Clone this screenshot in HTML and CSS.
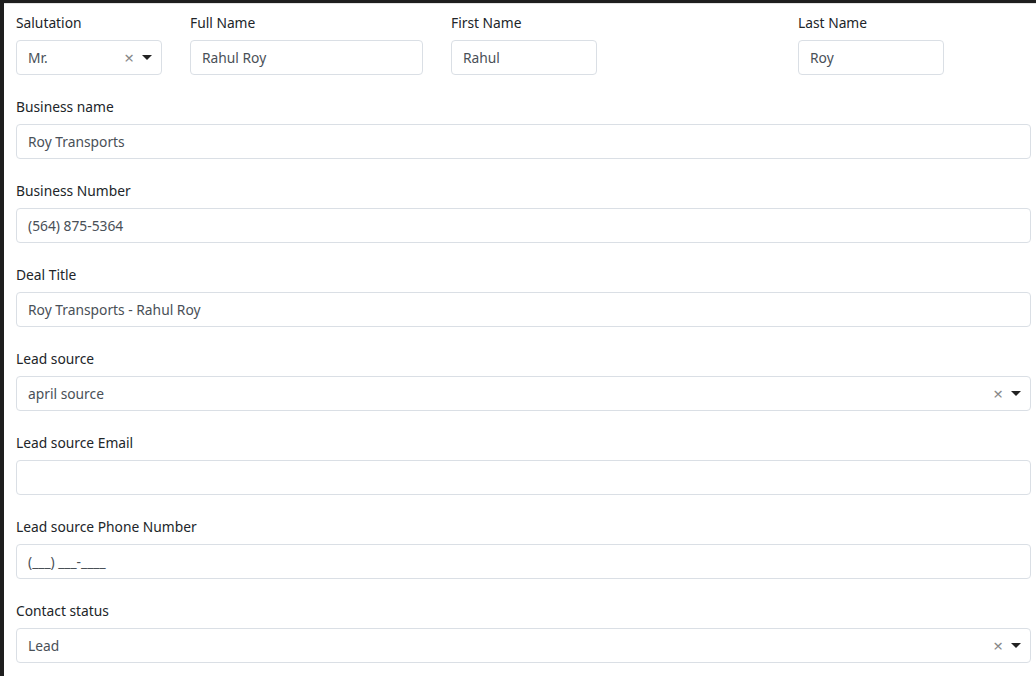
FILE: index.html
```html
<!DOCTYPE html>
<html lang="en">
<head>
  <meta charset="UTF-8" />
  <title>Deal Form</title>
  <link rel="stylesheet" href="styles.css">
</head>
<body>
  <form class="deal-form">
    <div class="name-row">
      <div class="form-group">
        <label>Salutation</label>
        <div class="select-box">
          <span class="select-value">Mr.</span>
          <span class="select-clear">&times;</span>
          <span class="select-caret"></span>
        </div>
      </div>
      <div class="form-group">
        <label>Full Name</label>
        <input class="form-control" type="text" value="Rahul Roy">
      </div>
      <div class="form-group">
        <label>First Name</label>
        <input class="form-control short" type="text" value="Rahul">
      </div>
      <div class="form-group">
        <label>Last Name</label>
        <input class="form-control short" type="text" value="Roy">
      </div>
    </div>

    <div class="form-group">
      <label>Business name</label>
      <input class="form-control" type="text" value="Roy Transports">
    </div>

    <div class="form-group">
      <label>Business Number</label>
      <input class="form-control" type="text" value="(564) 875-5364">
    </div>

    <div class="form-group">
      <label>Deal Title</label>
      <input class="form-control" type="text" value="Roy Transports - Rahul Roy">
    </div>

    <div class="form-group">
      <label>Lead source</label>
      <div class="select-box">
        <span class="select-value">april source</span>
        <span class="select-clear">&times;</span>
        <span class="select-caret"></span>
      </div>
    </div>

    <div class="form-group">
      <label>Lead source Email</label>
      <input class="form-control" type="text" value="">
    </div>

    <div class="form-group">
      <label>Lead source Phone Number</label>
      <input class="form-control" type="text" value="(___) ___-____">
    </div>

    <div class="form-group">
      <label>Contact status</label>
      <div class="select-box">
        <span class="select-value">Lead</span>
        <span class="select-clear">&times;</span>
        <span class="select-caret"></span>
      </div>
    </div>
  </form>
</body>
</html>
```

FILE: styles.css
```css
html {
  background: #1e1e1e;
}

body {
  margin: 0;
  height: 676px;
  overflow: hidden;
  font-family: 'Noto Sans', sans-serif;
  font-size: 13.8px;
  color: #212529;
  background: #fff;
  border-top: 3px solid #1e1e1e;
  border-left: 4px solid #1e1e1e;
  box-shadow: inset 0 1px 0 #e4e4e4;
  box-sizing: border-box;
}

.deal-form {
  padding: 8px 5px 0 12px;
}

.name-row {
  display: grid;
  grid-template-columns: 146px 233px 319px 146px;
  column-gap: 28px;
}

.form-group {
  margin-bottom: 20px;
}

.form-group label {
  display: block;
  line-height: 24px;
  margin-bottom: 5px;
}

.form-control,
.select-box {
  display: block;
  width: 100%;
  height: 35px;
  box-sizing: border-box;
  padding: 0 11px;
  border: 1px solid #dadfe5;
  border-radius: 4px;
  background: #fff;
  font-family: inherit;
  font-size: 13.8px;
  color: #495057;
  outline: none;
}

.form-control.short {
  width: 146px;
}

.select-box {
  display: flex;
  align-items: center;
  padding-right: 9px;
}

.select-value {
  flex: 1;
}

.select-clear {
  color: #888;
  font-size: 17px;
  line-height: 1;
  margin-right: 8px;
}

.select-caret {
  width: 0;
  height: 0;
  border-left: 5px solid transparent;
  border-right: 5px solid transparent;
  border-top: 5px solid #222;
}
```
